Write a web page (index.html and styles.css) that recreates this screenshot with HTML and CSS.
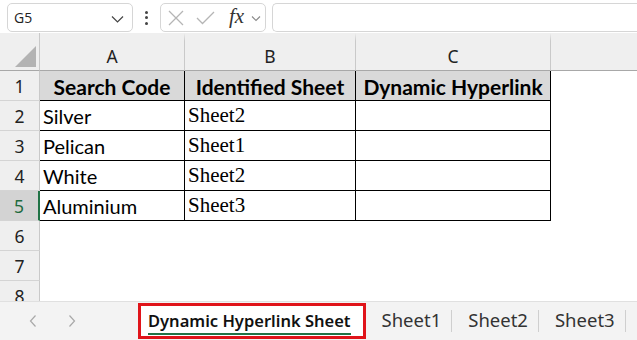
FILE: index.html
```html
<!DOCTYPE html>
<html>
<head>
<meta charset="utf-8">
<link rel="stylesheet" href="styles.css">
</head>
<body>
<div class="app">
  <div class="fbar">
    <div class="namebox">
      <span class="nb-text">G5</span>
      <svg class="chev" width="13" height="8" viewBox="0 0 13 8"><path d="M1 1.5 L6.5 7 L12 1.5" fill="none" stroke="#444" stroke-width="1.2"/></svg>
    </div>
    <div class="dots"><i></i><i></i><i></i></div>
    <div class="fxbox">
      <svg width="16" height="16" viewBox="0 0 16 16"><path d="M1 1 L15 15 M15 1 L1 15" stroke="#b5b5b5" stroke-width="1.3" fill="none"/></svg>
      <svg width="19" height="14" viewBox="0 0 19 14"><path d="M1 7 L6.5 12.5 L18 1" stroke="#b5b5b5" stroke-width="1.3" fill="none"/></svg>
      <span class="fx">fx</span>
      <svg class="fxchev" width="10" height="7" viewBox="0 0 10 7"><path d="M1 1.5 L5 5.5 L9 1.5" fill="none" stroke="#8a8a8a" stroke-width="1.1"/></svg>
    </div>
    <div class="finput"></div>
  </div>

  <div class="sheet">
    <div class="corner"><div class="tri"></div></div>
    <div class="ch">A</div>
    <div class="ch">B</div>
    <div class="ch">C</div>
    <div class="ch rest"></div>

    <div class="rh">1</div>
    <div class="c hd">Search Code</div>
    <div class="c hd">Identified Sheet</div>
    <div class="c hd">Dynamic Hyperlink</div>
    <div class="e"></div>

    <div class="rh">2</div>
    <div class="c">Silver</div>
    <div class="c serif">Sheet2</div>
    <div class="c"></div>
    <div class="e"></div>

    <div class="rh">3</div>
    <div class="c">Pelican</div>
    <div class="c serif">Sheet1</div>
    <div class="c"></div>
    <div class="e"></div>

    <div class="rh">4</div>
    <div class="c">White</div>
    <div class="c serif">Sheet2</div>
    <div class="c"></div>
    <div class="e"></div>

    <div class="rh sel">5</div>
    <div class="c">Aluminium</div>
    <div class="c serif">Sheet3</div>
    <div class="c"></div>
    <div class="e"></div>

    <div class="rh">6</div>
    <div class="e span4"></div>
    <div class="rh">7</div>
    <div class="e span4"></div>
    <div class="rh">8</div>
    <div class="e span4"></div>
  </div>

  <div class="tabbar">
    <div class="nav">
      <svg width="10" height="14" viewBox="0 0 10 14"><path d="M7.5 1.5 L2.5 7 L7.5 12.5" fill="none" stroke="#a8a8a8" stroke-width="1.2"/></svg>
      <svg width="10" height="14" viewBox="0 0 10 14"><path d="M2.5 1.5 L7.5 7 L2.5 12.5" fill="none" stroke="#a8a8a8" stroke-width="1.2"/></svg>
    </div>
    <div class="tabs">
      <div class="tab active"><span>Dynamic Hyperlink Sheet</span></div>
      <div class="tab">Sheet1</div>
      <div class="tab">Sheet2</div>
      <div class="tab">Sheet3</div>
    </div>
  </div>
</div>
</body>
</html>
```

FILE: styles.css
```css
* { box-sizing: border-box; }
html, body { margin: 0; padding: 0; }
body { width: 637px; height: 340px; overflow: hidden; background: #fff; font-family: "Noto Sans", sans-serif; }
.app { width: 637px; height: 340px; display: flex; flex-direction: column; overflow: hidden; }

.fbar { height: 33px; flex: none; display: flex; align-items: flex-start; padding-top: 3px; background: #fff; }
.namebox { margin-left: 7px; width: 126px; height: 29px; border: 1px solid #d6d6d6; border-radius: 5px; display: flex; align-items: center; justify-content: space-between; padding: 0 8px 0 6px; }
.nb-text { font-family: "Open Sans", sans-serif; font-size: 14px; color: #222; }
.chev { margin-top: 2px; }
.dots { width: 27px; height: 29px; display: flex; flex-direction: column; align-items: center; justify-content: center; gap: 2.5px; }
.dots i { display: block; width: 3px; height: 3px; background: #444; border-radius: 50%; }
.fxbox { width: 106px; height: 29px; border: 1px solid #d6d6d6; border-radius: 5px; display: flex; align-items: center; padding-left: 7px; gap: 12px; }
.fx { font-family: "Liberation Serif", serif; font-style: italic; font-size: 21px; color: #333; margin-left: 2px; line-height: 1; margin-top: -2px; }
.fxchev { margin-left: -5px; margin-top: 2px; }
.finput { margin-left: 6px; flex: 1; height: 29px; border: 1px solid #d6d6d6; border-right: none; border-radius: 5px 0 0 5px; }

.sheet { flex: 1; display: grid; grid-template-columns: 40px 145px 171px 195px 1fr; grid-template-rows: 38px repeat(7, 30px) 30px; background: #fff; overflow: hidden; }
.corner { background: #efefef; border-right: 1px solid #c9c9c9; border-bottom: 1px solid #a8a8a8; position: relative; }
.tri { position: absolute; left: 15px; bottom: 3px; width: 0; height: 0; border-left: 21px solid transparent; border-bottom: 21px solid #b3b3b3; }
.ch { background: #efefef; border-top: 8px solid #efefef; border-bottom: 1px solid #a8a8a8; border-right: 1px solid #c9c9c9; display: flex; align-items: flex-end; justify-content: center; padding-bottom: 2px; font-family: "Noto Sans", sans-serif; font-size: 17.5px; color: #222; }
.ch.rest { border-right: none; }

.rh { background: #efefef; border-right: 1px solid #c9c9c9; border-bottom: 1px solid #d4d4d4; display: flex; align-items: center; justify-content: center; font-family: "Noto Sans", sans-serif; font-size: 17.5px; color: #222; padding-top: 1px; }
.rh.sel { background: #d3d3d3; color: #1e6b3e; border-right: 2px solid #217346; }

.c { border-right: 1px solid #000; border-bottom: 1px solid #000; font-family: "Lato", sans-serif; font-size: 20px; color: #000; display: flex; align-items: flex-end; padding: 0 0 2px 3px; }
.c.hd { background: #d9d9d9; font-weight: bold; font-size: 21px; justify-content: center; padding-left: 0; padding-bottom: 1px; }
.c.serif { font-family: "Liberation Serif", serif; font-size: 21px; padding-bottom: 2px; }
.span4 { grid-column: span 4; }

.tabbar { height: 39px; flex: none; display: flex; background: #f3f3f3; border-top: 1px solid #e0e0e0; }
.nav { width: 138px; display: flex; align-items: center; gap: 29px; padding-left: 28px; }
.tabs { display: flex; align-items: stretch; font-family: "Noto Sans", sans-serif; font-size: 18.5px; color: #333; }
.tab { display: flex; align-items: center; padding: 0 11px 3px 16px; position: relative; }
.tab:not(.active)::after { content: ""; position: absolute; right: 0; top: 8px; bottom: 8px; width: 1px; background: #cfcfcf; }
.tab.active { background: #fff; border: 3px solid #e0141a; margin-top: 1px; margin-bottom: 1px; padding: 0 12px 0 7px; font-weight: 600; font-size: 16.5px; color: #111; }
.tab.active span { border-bottom: 2px solid #217346; padding-bottom: 1px; line-height: 22px; margin-top: 2px; }
```
